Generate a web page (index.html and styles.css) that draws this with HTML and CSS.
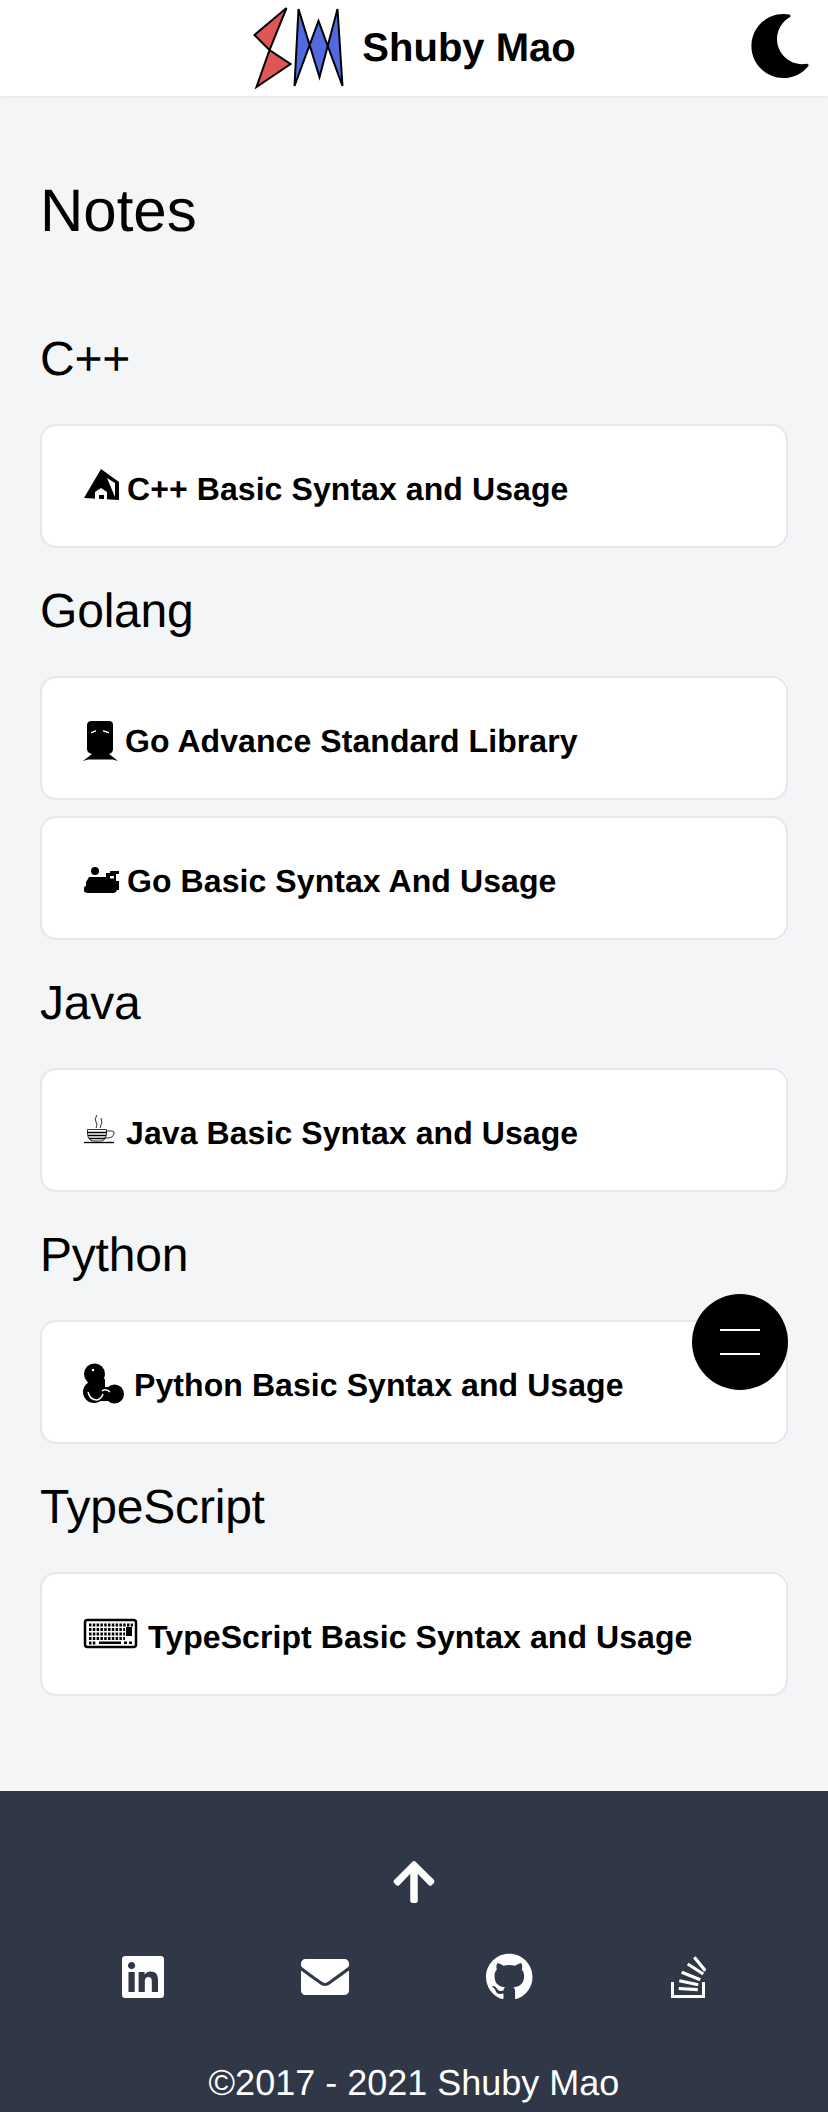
FILE: index.html
```html
<!DOCTYPE html>
<html lang="en">
<head>
<meta charset="utf-8">
<title>Notes</title>
<link rel="stylesheet" href="styles.css">
</head>
<body>
<header class="top">
  <a class="brand" href="#">
    <svg class="logo" viewBox="252.500 4 92 84" aria-hidden="true">
      <path class="red" d="M287 6 L255 33 L270 48 L257 85 L291 62 L270 48 Z"/>
      <path class="blue" d="M299 7 L295 84 L319 19 L343 84 L338 7 L320 75 Z"/>
    </svg>
    <span class="name">Shuby Mao</span>
  </a>
  <svg class="moon" viewBox="0 0 512 512" aria-hidden="true"><path d="M283.211 512c78.962 0 151.079-35.925 198.857-94.792 7.068-8.708-.639-21.430-11.562-19.350-124.203 23.654-238.262-71.576-238.262-196.954 0-72.222 38.662-138.635 101.498-174.394 9.686-5.512 7.250-20.197-3.756-22.230A258.156 258.156 0 0 0 283.211 0c-141.309 0-256 114.511-256 256 0 141.309 114.511 256 256 256z"/></svg>
</header>
<main class="page">
  <h1 class="title">Notes</h1>
  <h2 class="topic">C++</h2>
  <a class="card" href="#">
    <svg class="emo" width="35" height="48" viewBox="0 0 35 48" aria-hidden="true">
      <path d="M18 4 L36 17 L36 35 L1 33 Z"/>
      <path class="hole" d="M24 13 L32 18 L32 32 Z"/>
      <path class="hole" d="M12 35 V27 L18 23 L24 27 V35 H21 V30 H16 V35 Z"/>
    </svg>
    <span>C++ Basic Syntax and Usage</span>
  </a>
  <h2 class="topic">Golang</h2>
  <a class="card" href="#">
    <svg class="emo" width="33" height="48" viewBox="0 0 33 48" aria-hidden="true">
      <path d="M9 4 H26 Q30 4 30 8 V32 Q30 36 26 37 L35 44 L30 42.500 H5 L0 44 L9 37 Q4 36 4 32 V8 Q4 4 9 4 Z"/>
      <path class="hole" d="M8 15 L13 13 L13 14.500 L8 16.500 Z M20 13 L26 15 L26 16.500 L20 14.500 Z"/>
    </svg>
    <span>Go Advance Standard Library</span>
  </a>
  <a class="card" href="#">
    <svg class="emo" width="35" height="48" viewBox="0 0 35 48" aria-hidden="true">
      <circle cx="12" cy="14" r="4"/>
      <path d="M6 20 H23 V16 H27 V14 H36 V17 H33 V24 H36 V33 H34 Q33 36 30 36 H6 Q2 36 1 34 V31 Q1 29 3 29 V25 Q5 22 6 20 Z"/>
      <path class="hole" d="M27 19 H31 V21.500 H27 Z"/>
    </svg>
    <span>Go Basic Syntax And Usage</span>
  </a>
  <h2 class="topic">Java</h2>
  <a class="card" href="#">
    <svg class="emo" width="34" height="48" viewBox="0 0 34 48" aria-hidden="true">
      <path class="line" d="M14 6 Q11 10 13 13 Q15 16 13 19 M18 9 Q20 13 17 19"/>
      <path class="line" d="M4.500 20.500 H23.500 V25 Q23 31 18 32 H10 Q5 31 4.500 25 Z"/>
      <path class="line" d="M23.500 22 H29 Q31.500 22 31 25 Q30 29 25 29 H21"/>
      <path class="bold" d="M4.500 23.500 H23.500 M5 26.500 H23 M6 29.500 H22"/>
      <path class="bold" d="M1 33.500 H31"/>
    </svg>
    <span>Java Basic Syntax and Usage</span>
  </a>
  <h2 class="topic">Python</h2>
  <a class="card" href="#">
    <svg class="emo" width="42" height="48" viewBox="0 0 42 48" aria-hidden="true">
      <circle cx="11.500" cy="13" r="10.500"/>
      <path d="M5 18 H22 V30 H5 Z"/>
      <circle cx="11" cy="31" r="11"/>
      <path d="M14 26 H30 V40 H14 Z"/>
      <circle cx="31.500" cy="33" r="9.500"/>
      <path class="cut" d="M5 31 Q7 39 14 39 Q18 38 20 33"/>
      <path class="cut" d="M19 30 Q23 27 27 31"/>
      <circle class="hole" cx="10" cy="9" r="1.300"/>
    </svg>
    <span>Python Basic Syntax and Usage</span>
  </a>
  <h2 class="topic">TypeScript</h2>
  <a class="card" href="#">
    <svg class="emo" width="56" height="48" viewBox="0 0 56 48" aria-hidden="true">
      <rect class="kbox" x="2" y="7" width="51" height="27" rx="2.500"/>
      <path class="keys" d="M6 12 H50 M6 16.500 H42 M6 21 H42 M6 25.500 H42 M6 30 H13"/>
      <path d="M43 14 H49 V23 H43 Z M16 28.500 H38 V31 H16 Z M41 28.500 H44 V31 H41 Z M46 28.500 H49 V31 H46 Z"/>
    </svg>
    <span>TypeScript Basic Syntax and Usage</span>
  </a>
</main>
<button class="fab" aria-label="Menu"><span class="bar"></span><span class="bar"></span></button>
<footer class="foot">
  <svg class="up" viewBox="0 0 448 512" aria-hidden="true"><path d="M34.900 289.500l-22.200-22.200c-9.400-9.400-9.400-24.600 0-33.900L207 39c9.400-9.400 24.600-9.400 33.900 0l194.300 194.300c9.400 9.400 9.400 24.600 0 33.900L413 289.400c-9.500 9.500-25 9.300-34.300-.4L264 168.600V456c0 13.300-10.700 24-24 24h-32c-13.300 0-24-10.700-24-24V168.600L69.200 289.100c-9.300 9.800-24.800 10-34.300.4z"/></svg>
  <div class="socials">
    <svg class="ico" viewBox="0 0 448 512"><path d="M416 32H31.900C14.300 32 0 46.500 0 64.300v383.400C0 465.500 14.300 480 31.900 480H416c17.600 0 32-14.500 32-32.300V64.300c0-17.800-14.400-32.300-32-32.300zM135.400 416H69V202.200h66.500V416zm-33.200-243c-21.300 0-38.500-17.300-38.500-38.500S80.900 96 102.200 96c21.200 0 38.500 17.300 38.500 38.500 0 21.300-17.200 38.500-38.500 38.500zm282.100 243h-66.400V312c0-24.800-.5-56.700-34.500-56.700-34.600 0-39.900 27-39.900 54.900V416h-66.400V202.200h63.700v29.200h.9c8.900-16.800 30.600-34.500 62.900-34.500 67.200 0 79.700 44.300 79.700 101.900V416z"/></svg>
    <svg class="ico" viewBox="0 0 512 512"><path d="M502.300 190.800c3.900-3.100 9.700-.2 9.700 4.700V400c0 26.500-21.500 48-48 48H48c-26.500 0-48-21.500-48-48V195.600c0-5 5.700-7.800 9.700-4.700 22.400 17.400 52.100 39.500 154.100 113.600 21.100 15.400 56.700 47.800 92.200 47.600 35.700.3 72-32.800 92.300-47.600 102-74.100 131.600-96.300 154-113.700zM256 320c23.200.4 56.600-29.200 73.400-41.400 132.700-96.300 142.800-104.700 173.400-128.700 5.800-4.500 9.200-11.500 9.200-18.900v-19c0-26.500-21.500-48-48-48H48C21.500 64 0 85.500 0 112v19c0 7.400 3.400 14.300 9.200 18.900 30.600 23.900 40.700 32.400 173.400 128.700 16.800 12.200 50.200 41.800 73.400 41.400z"/></svg>
    <svg class="ico" viewBox="0 0 16 16"><path d="M8 0C3.580 0 0 3.580 0 8c0 3.540 2.290 6.530 5.470 7.590.4.070.55-.17.55-.38 0-.19-.01-.82-.01-1.490-2.010.37-2.530-.49-2.690-.94-.09-.23-.48-.94-.82-1.130-.28-.15-.68-.52-.01-.53.63-.01 1.080.58 1.230.82.72 1.210 1.870.87 2.330.66.07-.52.28-.87.51-1.070-1.780-.2-3.640-.89-3.640-3.950 0-.87.31-1.590.82-2.150-.08-.2-.36-1.020.08-2.120 0 0 .67-.21 2.200.82.64-.18 1.320-.27 2-.27.68 0 1.360.09 2 .27 1.530-1.040 2.200-.82 2.200-.82.44 1.100.16 1.920.08 2.120.51.56.82 1.270.82 2.150 0 3.070-1.870 3.750-3.650 3.950.29.25.54.73.54 1.480 0 1.070-.01 1.930-.01 2.200 0 .21.15.46.55.38A8.013 8.013 0 0 0 16 8c0-4.420-3.580-8-8-8z"/></svg>
    <svg class="ico" viewBox="-1 -3 36 48">
      <path d="M0 26 H3 V39 H31 V26 H34 V42 H0 Z"/>
      <path class="sbars" d="M7.700 32.500 L26.700 33.700 M8.300 24.700 L27.300 28.700 M10.700 16.300 L29.300 23.700 M16.700 8 L32.300 18 M23.300 1.300 L34.300 14.700"/>
    </svg>
  </div>
  <p class="copy">©2017 - 2021 Shuby Mao</p>
</footer>
</body>
</html>
```
FILE: styles.css
```css
* { box-sizing: border-box; }
html, body { margin: 0; padding: 0; }
body {
  font-family: "Liberation Sans", Arial, sans-serif;
  text-rendering: geometricPrecision;
  background: #f4f5f7;
  color: #000;
  width: 828px;
  position: relative;
}
a { color: inherit; text-decoration: none; }
.top {
  height: 96px;
  background: #fff;
  box-shadow: 0 1px 3px rgba(0,0,0,.08);
  display: flex;
  align-items: center;
  justify-content: center;
  position: relative;
}
.brand { display: flex; align-items: center; gap: 18px; font-size: 40px; font-weight: 700; }
.logo { width: 92px; height: 84px; display: block; }
.logo path { stroke: #000; stroke-width: 2; stroke-linejoin: miter; }
.red { fill: #e05656; }
.blue { fill: #5269e0; }
.moon { position: absolute; right: 16px; top: 14px; width: 64px; height: 64px; }
.page { display: flex; flex-direction: column; padding: 85px 40px 79px; }
.title { font-size: 60px; line-height: 60px; font-weight: 400; margin: 0 0 71px; }
.topic { font-size: 48px; line-height: 48px; font-weight: 400; letter-spacing: -.2px; margin: 24px 0 40px; }
.card {
  display: flex;
  align-items: center;
  gap: 9px;
  background: #fff;
  border: 2px solid #e5e7eb;
  border-radius: 16px;
  padding: 6px 41px 0;
  font-size: 32px;
  line-height: 36px;
  font-weight: 700;
  letter-spacing: .08px;
  margin-bottom: 16px;
  height: 124px;
  flex: none;
}
.emo { flex: none; overflow: visible; fill: #000; }
.hole { fill: #fff; }
.cut { fill: none; stroke: #fff; stroke-width: 1.500; }
.line { fill: none; stroke: #000; stroke-width: .8; }
.bold { fill: none; stroke: #000; stroke-width: 1.400; }
.kbox { fill: #fff; stroke: #000; stroke-width: 2.500; }
.keys { fill: none; stroke: #000; stroke-width: 2.800; stroke-dasharray: 2.500 1.300; }
.fab {
  position: absolute;
  left: 692px;
  top: 1294px;
  width: 96px;
  height: 96px;
  border: 0;
  border-radius: 50%;
  background: #000;
  display: flex;
  flex-direction: column;
  align-items: center;
  justify-content: center;
  gap: 22px;
  padding: 0;
}
.bar { display: block; width: 40px; height: 2px; background: #fff; }
.foot {
  background: #303746;
  color: #fff;
  height: 321px;
  display: flex;
  flex-direction: column;
  align-items: center;
  padding-top: 67px;
}
.up { width: 42px; height: 48px; fill: #fff; display: block; }
.socials { display: flex; justify-content: space-around; width: 720px; margin-top: 47px; align-items: center; }
.ico { height: 48px; fill: #fff; display: block; }
.ico:nth-child(1) { width: 42px; }
.ico:nth-child(2) { width: 48px; }
.ico:nth-child(3) { width: 46.500px; }
.ico:nth-child(4) { width: 36px; }
.sbars { fill: none; stroke: #fff; stroke-width: 3.200; }
.copy { font-size: 36px; line-height: 40px; margin: 62px 0 0; }
```
